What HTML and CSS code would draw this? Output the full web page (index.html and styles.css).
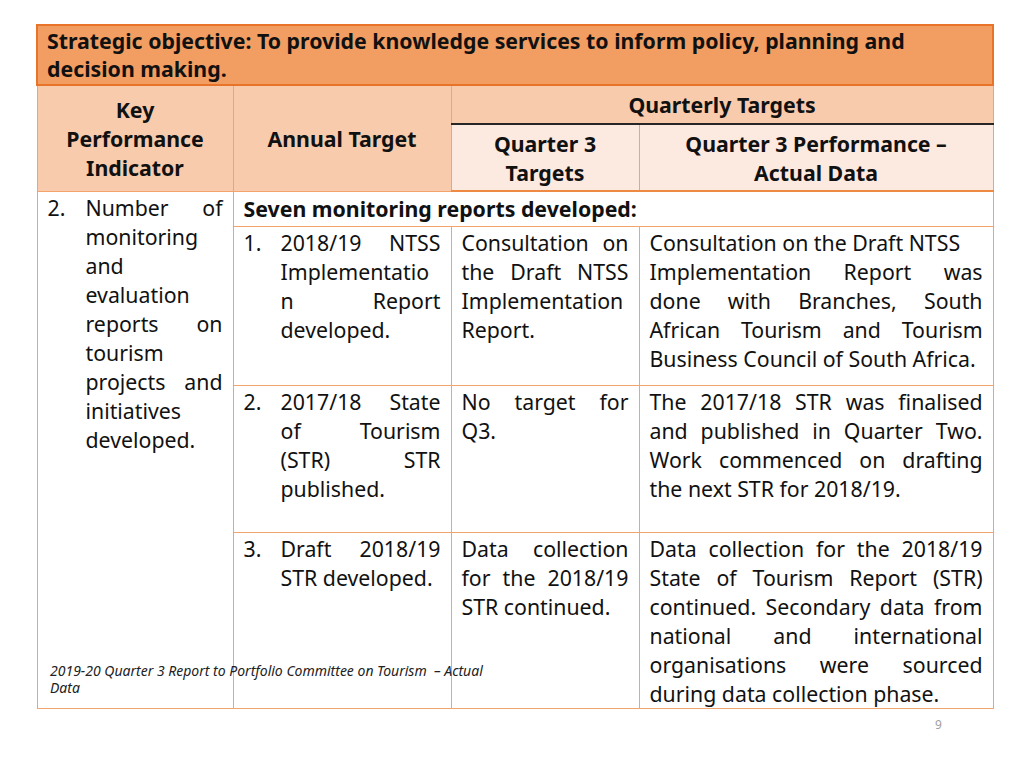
FILE: index.html
```html
<!DOCTYPE html>
<html lang="en">
<head>
  <meta charset="UTF-8">
  <meta name="viewport" content="width=device-width, initial-scale=1.0">
  <title>Quarter 3 Report</title>
  <link rel="stylesheet" href="styles.css">
</head>
<body>
  <div class="slide">
    <table class="kpi-table">
      <colgroup>
        <col class="col-kpi">
        <col class="col-annual">
        <col class="col-q3">
        <col class="col-perf">
      </colgroup>
      <tr class="objective-row">
        <th colspan="4" class="objective">Strategic objective: To provide knowledge services to inform policy, planning and decision making.</th>
      </tr>
      <tr class="head-row-top">
        <th rowspan="2" class="head">Key<br>Performance<br>Indicator</th>
        <th rowspan="2" class="head">Annual Target</th>
        <th colspan="2" class="head quarterly">Quarterly Targets</th>
      </tr>
      <tr class="head-row-sub">
        <th class="head sub">Quarter 3<br>Targets</th>
        <th class="head sub">Quarter 3 Performance –<br>Actual Data</th>
      </tr>
      <tr class="seven-row">
        <td rowspan="4" class="cell">
          <div class="numbered kpi-item">
            <span class="num">2.</span>
            <span class="txt">Number of monitoring and evaluation reports on tourism projects and initiatives developed.</span>
          </div>
        </td>
        <td colspan="3" class="cell bold-line">Seven monitoring reports developed:</td>
      </tr>
      <tr class="row-1">
        <td class="cell">
          <div class="numbered">
            <span class="num">1.</span>
            <span class="txt">2018/19 NTSS Implementatio<br>n Report developed.</span>
          </div>
        </td>
        <td class="cell just">Consultation on the Draft NTSS Implementation Report.</td>
        <td class="cell just">Consultation on the Draft NTSS<br>Implementation Report was done with Branches, South African Tourism and Tourism Business Council of South Africa.</td>
      </tr>
      <tr class="row-2">
        <td class="cell">
          <div class="numbered">
            <span class="num">2.</span>
            <span class="txt">2017/18 State of Tourism (STR) STR published.</span>
          </div>
        </td>
        <td class="cell just">No target for Q3.</td>
        <td class="cell just">The 2017/18 STR was finalised and published in Quarter Two. Work commenced on drafting the next STR for 2018/19.</td>
      </tr>
      <tr class="row-3">
        <td class="cell">
          <div class="numbered">
            <span class="num">3.</span>
            <span class="txt">Draft 2018/19 STR developed.</span>
          </div>
        </td>
        <td class="cell just">Data collection for the 2018/19 STR continued.</td>
        <td class="cell just">Data collection for the 2018/19 State of Tourism Report (STR) continued. Secondary data from national and international organisations were sourced during data collection phase.</td>
      </tr>
    </table>

    <div class="footer-note">2019-20 Quarter 3 Report to Portfolio Committee on Tourism &nbsp;– Actual Data</div>
    <div class="page-num">9</div>
  </div>
</body>
</html>
```

FILE: styles.css
```css
body {
  margin: 0;
  background: #ffffff;
  font-family: 'Noto Sans', 'Open Sans', sans-serif;
  color: #111;
}
.slide {
  position: relative;
  width: 1024px;
  height: 768px;
  padding: 24px 0 0 36px;
  box-sizing: border-box;
}

/* table */
.kpi-table {
  border-collapse: collapse;
  table-layout: fixed;
  width: 956px;
  font-size: 21.3px;
  line-height: 29px;
}
.col-kpi { width: 196px; }
.col-annual { width: 218px; }
.col-q3 { width: 188px; }
.col-perf { width: 354px; }

.kpi-table th,
.kpi-table td {
  border: 1px solid #f2a46c;
  padding: 1px 10px 0 10px;
  box-sizing: border-box;
}

/* header */
.objective-row { height: 60px; }
.objective {
  background: #f29e63;
  border: 2px solid #e8742a !important;
  text-align: left;
  font-weight: bold;
  font-size: 21.3px;
  line-height: 28px;
  padding: 1px 10px 0 9px !important;
  vertical-align: top;
}
.head-row-top { height: 39px; }
.head-row-sub { height: 67px; }
.head {
  background: #f8cbad;
  font-weight: bold;
  text-align: center;
  vertical-align: middle;
  padding: 0 4px !important;
}
.quarterly {
  border-bottom: 2px solid #262626 !important;
}
.head.sub {
  background: #fce9e0;
  border-bottom: 2px solid #ef8a45 !important;
}

/* body */
.cell {
  vertical-align: top;
  background: #fff;
}
.seven-row { height: 35px; }
.row-1 { height: 159px; }
.row-2 { height: 147px; }
.row-3 { height: 174px; }
.bold-line {
  font-weight: bold;
  vertical-align: middle;
  padding-top: 0 !important;
}
.just {
  text-align: justify;
}
.numbered {
  display: flex;
}
.numbered .num {
  flex: 0 0 37px;
}
.numbered .txt {
  flex: 1;
  text-align: justify;
}
.kpi-item .num {
  flex-basis: 38px;
}

/* slide extras */
.footer-note {
  position: absolute;
  left: 50px;
  top: 662px;
  width: 450px;
  font-size: 14px;
  line-height: 17px;
  font-style: italic;
  color: #222;
}
.page-num {
  position: absolute;
  left: 935px;
  top: 716px;
  font-size: 12px;
  color: #a0a0a0;
}
```
